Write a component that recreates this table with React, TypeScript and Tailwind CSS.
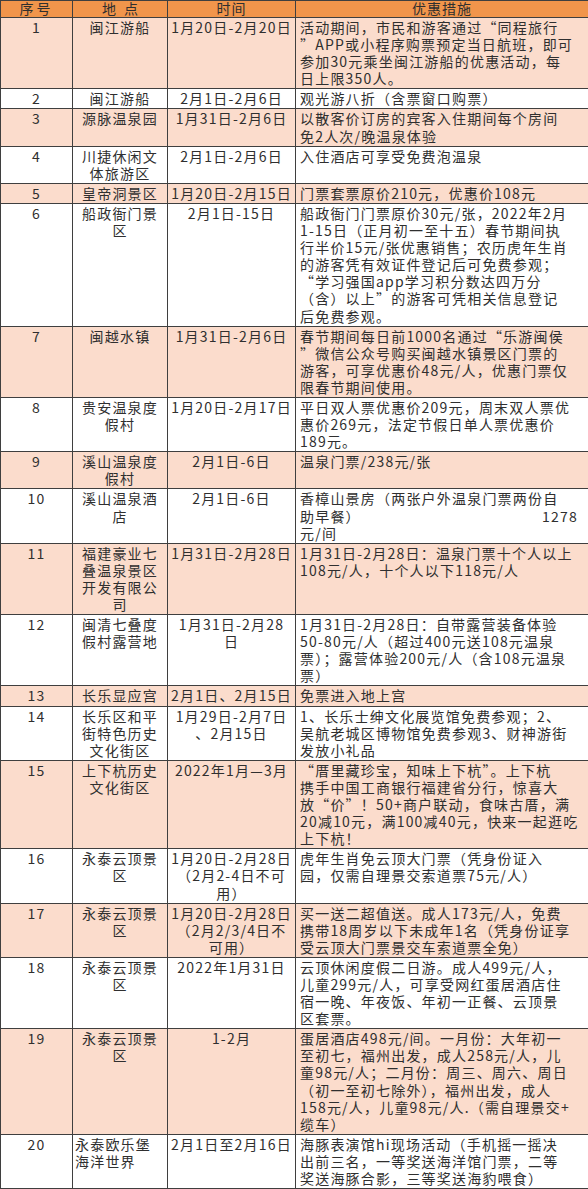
type Line = string | [string, string];

interface Row {
  no: number;
  place: string[];
  placeLeft?: boolean;
  time: string[];
  desc: Line[];
}

const rows: Row[] = [
  {
    no: 1,
    place: ['闽江游船'],
    time: ['1月20日-2月20日'],
    desc: ['活动期间，市民和游客通过“同程旅行', '”APP或小程序购票预定当日航班，即可', '参加30元乘坐闽江游船的优惠活动，每', '日上限350人。'],
  },
  { no: 2, place: ['闽江游船'], time: ['2月1日-2月6日'], desc: ['观光游八折（含票窗口购票）'] },
  { no: 3, place: ['源脉温泉园'], time: ['1月31日-2月6日'], desc: ['以散客价订房的宾客入住期间每个房间', '免2人次/晚温泉体验'] },
  { no: 4, place: ['川捷休闲文', '体旅游区'], time: ['2月1日-2月6日'], desc: ['入住酒店可享受免费泡温泉'] },
  { no: 5, place: ['皇帝洞景区'], time: ['1月20日-2月15日'], desc: ['门票套票原价210元，优惠价108元'] },
  {
    no: 6,
    place: ['船政衙门景', '区'],
    time: ['2月1日-15日'],
    desc: [
      '船政衙门门票原价30元/张，2022年2月',
      '1-15日（正月初一至十五）春节期间执',
      '行半价15元/张优惠销售；农历虎年生肖',
      '的游客凭有效证件登记后可免费参观；',
      '“学习强国app学习积分数达四万分',
      '（含）以上”的游客可凭相关信息登记',
      '后免费参观。',
    ],
  },
  {
    no: 7,
    place: ['闽越水镇'],
    time: ['1月31日-2月6日'],
    desc: ['春节期间每日前1000名通过“乐游闽侯', '”微信公众号购买闽越水镇景区门票的', '游客，可享优惠价48元/人，优惠门票仅', '限春节期间使用。'],
  },
  {
    no: 8,
    place: ['贵安温泉度', '假村'],
    time: ['1月20日-2月17日'],
    desc: ['平日双人票优惠价209元，周末双人票优', '惠价269元，法定节假日单人票优惠价', '189元。'],
  },
  { no: 9, place: ['溪山温泉度', '假村'], time: ['2月1日-6日'], desc: ['温泉门票/238元/张'] },
  {
    no: 10,
    place: ['溪山温泉酒', '店'],
    time: ['2月1日-6日'],
    desc: ['香樟山景房（两张户外温泉门票两份自', ['助早餐）', '1278'], '元/间'],
  },
  {
    no: 11,
    place: ['福建豪业七', '叠温泉景区', '开发有限公', '司'],
    time: ['1月31日-2月28日'],
    desc: ['1月31日-2月28日：温泉门票十个人以上', '108元/人，十个人以下118元/人'],
  },
  {
    no: 12,
    place: ['闽清七叠度', '假村露营地'],
    time: ['1月31日-2月28', '日'],
    desc: ['1月31日-2月28日：自带露营装备体验', '50-80元/人（超过400元送108元温泉', '票）；露营体验200元/人（含108元温泉', '票）'],
  },
  { no: 13, place: ['长乐显应宫'], time: ['2月1日、2月15日'], desc: ['免票进入地上宫'] },
  {
    no: 14,
    place: ['长乐区和平', '街特色历史', '文化街区'],
    time: ['1月29日-2月7日', '、2月15日'],
    desc: ['1、长乐士绅文化展览馆免费参观；2、', '吴航老城区博物馆免费参观3、财神游街', '发放小礼品'],
  },
  {
    no: 15,
    place: ['上下杭历史', '文化街区'],
    time: ['2022年1月—3月'],
    desc: [
      '“厝里藏珍宝，知味上下杭”。上下杭',
      '携手中国工商银行福建省分行，惊喜大',
      '放“价”！50+商户联动，食味古厝，满',
      '20减10元，满100减40元，快来一起逛吃',
      '上下杭！',
    ],
  },
  {
    no: 16,
    place: ['永泰云顶景', '区'],
    time: ['1月20日-2月28日', '（2月2-4日不可', '用）'],
    desc: ['虎年生肖免云顶大门票（凭身份证入', '园，仅需自理景交索道票75元/人）'],
  },
  {
    no: 17,
    place: ['永泰云顶景', '区'],
    time: ['1月20日-2月28日', '（2月2/3/4日不', '可用）'],
    desc: ['买一送二超值送。成人173元/人，免费', '携带18周岁以下未成年1名（凭身份证享', '受云顶大门票景交车索道票全免）'],
  },
  {
    no: 18,
    place: ['永泰云顶景', '区'],
    time: ['2022年1月31日'],
    desc: ['云顶休闲度假二日游。成人499元/人，', '儿童299元/人，可享受网红蛋居酒店住', '宿一晚、年夜饭、年初一正餐、云顶景', '区套票。'],
  },
  {
    no: 19,
    place: ['永泰云顶景', '区'],
    time: ['1-2月'],
    desc: [
      '蛋居酒店498元/间。一月份：大年初一',
      '至初七，福州出发，成人258元/人，儿',
      '童98元/人；二月份：周三、周六、周日',
      '（初一至初七除外），福州出发，成人',
      '158元/人，儿童98元/人.（需自理景交+',
      '缆车）',
    ],
  },
  {
    no: 20,
    place: ['永泰欧乐堡', '海洋世界'],
    placeLeft: true,
    time: ['2月1日至2月16日'],
    desc: ['海豚表演馆hi现场活动（手机摇一摇决', '出前三名，一等奖送海洋馆门票，二等', '奖送海豚合影，三等奖送海豹喂食）'],
  },
];

function Lines({ lines }: { lines: Line[] }) {
  return (
    <>
      {lines.map((l, i) =>
        Array.isArray(l) ? (
          <div key={i} className="flex justify-between whitespace-nowrap pr-[10px]">
            <span>{l[0]}</span>
            <span>{l[1]}</span>
          </div>
        ) : (
          <div key={i} className="whitespace-nowrap">{l}</div>
        ),
      )}
    </>
  );
}

export default function App() {
  const cell = 'border border-[#3f3f3f] align-top pt-[1px] pb-[1px] overflow-hidden';
  const head = 'border border-[#3f3f3f] font-normal text-center leading-[15px] pb-[1px]';
  return (
    <div
      className="w-[588px] h-[1189px] bg-white text-[#2f2f2f] text-[14px] leading-[17.1px] tracking-[1.2px]"
      style={{ fontFamily: '"Noto Sans CJK SC", "Noto Sans", sans-serif' }}
    >
      <table className="w-[588px] table-fixed border-collapse">
        <colgroup>
          <col className="w-[72px]" />
          <col className="w-[95px]" />
          <col className="w-[128px]" />
          <col className="w-[293px]" />
        </colgroup>
        <thead>
          <tr className="bg-[#f1954b] h-[17px]">
            <th className={`${head} tracking-[3px]`}>序号</th>
            <th className={`${head} tracking-[8px] pl-[8px]`}>地点</th>
            <th className={`${head} tracking-[1px]`}>时间</th>
            <th className={`${head} tracking-[1px]`}>优惠措施</th>
          </tr>
        </thead>
        <tbody>
          {rows.map(r => (
            <tr key={r.no} className={r.no % 2 === 1 ? 'bg-[#fbdccc]' : 'bg-white'}>
              <td className={`${cell} text-center`}>{r.no}</td>
              <td className={`${cell} ${r.placeLeft ? 'text-left pl-[2px]' : 'text-center'}`}>
                <Lines lines={r.place} />
              </td>
              <td className={`${cell} text-center`}>
                <Lines lines={r.time} />
              </td>
              <td className={`${cell} text-left pl-[4px]`}>
                <Lines lines={r.desc} />
              </td>
            </tr>
          ))}
        </tbody>
      </table>
    </div>
  );
}
